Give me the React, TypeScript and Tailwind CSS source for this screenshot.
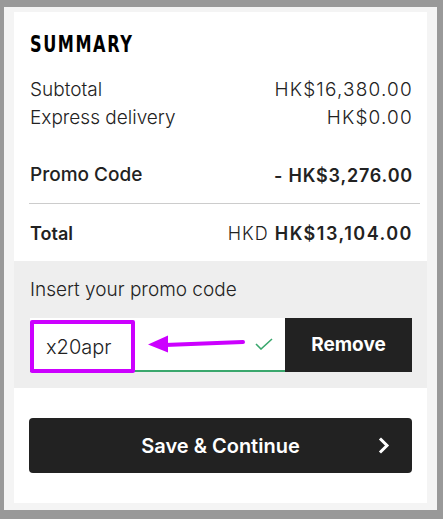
import React from "react";

const rows = [
  { label: "Subtotal", value: "HK$16,380.00" },
  { label: "Express delivery", value: "HK$0.00" },
];

function Chevron() {
  return (
    <svg width="12" height="17" viewBox="0 0 12 17" fill="none">
      <path d="M3 2.5L9 8.5L3 14.5" stroke="white" strokeWidth="3" strokeLinecap="square" />
    </svg>
  );
}

function Check() {
  return (
    <svg width="18" height="12" viewBox="0 0 18 12" fill="none">
      <path d="M1 6L6 11L17 1" stroke="#3aa76d" strokeWidth="1.6" />
    </svg>
  );
}

function Arrow() {
  return (
    <svg width="98" height="20" viewBox="0 0 98 20" className="absolute left-[147px] top-[334px]">
      <path d="M18 11L96 8" stroke="#cc00ff" strokeWidth="4" strokeLinecap="round" />
      <path d="M1 10.5L21 1.5L21 18.5Z" fill="#cc00ff" />
    </svg>
  );
}

export default function App() {
  return (
    <div
      className="relative min-h-[519px] w-[443px] bg-[#999999] pt-[7px] pl-[4px] pr-[6px] pb-[9px] text-[#222]"
      style={{ fontFamily: "Inter, 'Noto Sans', sans-serif" }}
    >
      <div className="bg-[#f4f4f4] pt-[5px] px-[10px] pb-[7px]">
        <div className="bg-white">
          {/* Summary block */}
          <div className="pl-[16px] pr-[15px] pt-[18px]">
            <h2
              className="h-[28px] origin-left scale-x-[0.78] text-[23px] leading-[28px] font-bold tracking-[2px] text-black"
              style={{ fontFamily: "'DejaVu Sans Condensed', 'DejaVu Sans', sans-serif", fontStretch: "condensed" }}
            >
              SUMMARY
            </h2>
            <div className="mt-[18px]">
              {rows.map((r) => (
                <div key={r.label} className="flex h-[28px] items-center justify-between text-[19px] font-light">
                  <span>{r.label}</span>
                  <span className="tracking-[1.2px] mr-[-1px]">{r.value}</span>
                </div>
              ))}
            </div>
            <div className="mt-[29px] flex h-[28px] items-center justify-between text-[18px] font-medium">
              <span className="text-[19px]">Promo Code</span>
              <span className="font-semibold tracking-[0.8px] mr-[-1px]">- HK$3,276.00</span>
            </div>
            <div className="mt-[14px] mr-[-8px] ml-[-1px] h-px bg-[#cccccc]" />
            <div className="mt-[15px] flex h-[28px] items-center justify-between text-[18px]">
              <span className="font-semibold">Total</span>
              <span className="mr-[-1px]">
                <span className="font-light tracking-[1px]">HKD </span>
                <span className="font-semibold tracking-[1.5px]">HK$13,104.00</span>
              </span>
            </div>
          </div>

          {/* Promo code input */}
          <div className="mt-[14px] bg-[#eeeeee] pl-[16px] pr-[15px] pt-[15px] pb-[16px]">
            <div className="h-[28px] text-[19px] leading-[28px] font-light">Insert your promo code</div>
            <div className="mt-[14px] flex h-[54px]">
              <div className="flex flex-1 items-center justify-end border-b-2 border-[#3aa76d] bg-white pr-[12px]">
                <Check />
              </div>
              <button className="w-[127px] bg-[#222222] text-[19px] font-bold text-white">Remove</button>
            </div>
          </div>

          {/* Save button */}
          <div className="pl-[15px] pr-[15px] pt-[30px] pb-[30px]">
            <button className="relative flex h-[55px] w-full items-center justify-center rounded-[4px] bg-[#222222] text-[20px] font-semibold text-white">
              Save &amp; Continue
              <span className="absolute right-[22px] top-[19px]">
                <Chevron />
              </span>
            </button>
          </div>
        </div>
      </div>

      {/* Annotation overlay */}
      <div className="absolute left-[30px] top-[320px] flex h-[53px] w-[105px] items-center rounded-[2px] border-4 border-[#cc00ff] bg-white pl-[12px] text-[20px] font-light text-[#222]">
        x20apr
      </div>
      <Arrow />
    </div>
  );
}
